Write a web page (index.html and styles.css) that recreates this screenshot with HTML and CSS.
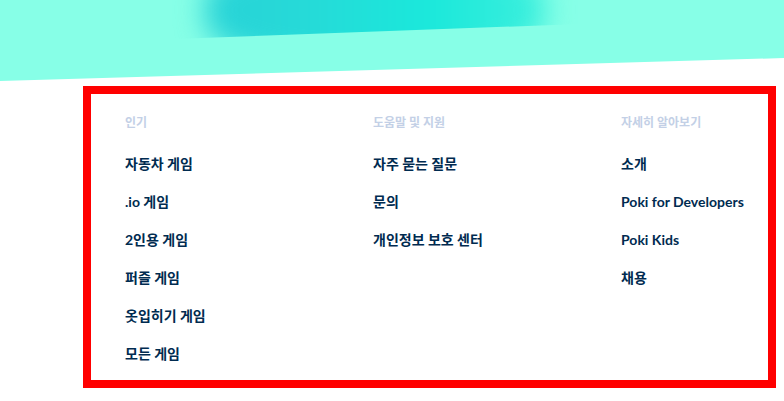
FILE: index.html
```html
<!DOCTYPE html>
<html lang="ko">
<head>
<meta charset="utf-8">
<link rel="stylesheet" href="styles.css">
</head>
<body>
<div class="hero">
  <div class="blob-clip"><div class="blob"></div></div>
</div>
<nav class="footer-nav">
  <div class="col">
    <div class="col-title">인기</div>
    <a class="link" href="#">자동차 게임</a>
    <a class="link" href="#">.io 게임</a>
    <a class="link" href="#">2인용 게임</a>
    <a class="link" href="#">퍼즐 게임</a>
    <a class="link" href="#">옷입히기 게임</a>
    <a class="link" href="#">모든 게임</a>
  </div>
  <div class="col">
    <div class="col-title">도움말 및 지원</div>
    <a class="link" href="#">자주 묻는 질문</a>
    <a class="link" href="#">문의</a>
    <a class="link" href="#">개인정보 보호 센터</a>
  </div>
  <div class="col">
    <div class="col-title">자세히 알아보기</div>
    <a class="link" href="#">소개</a>
    <a class="link" href="#">Poki for Developers</a>
    <a class="link" href="#">Poki Kids</a>
    <a class="link" href="#">채용</a>
  </div>
</nav>
</body>
</html>
```

FILE: styles.css
```css
html, body {
  margin: 0;
  padding: 0;
  background: #ffffff;
}
body {
  width: 784px;
  height: 401px;
  overflow: hidden;
  font-family: Lato, "Noto Sans CJK KR", "Noto Sans", sans-serif;
}
.hero {
  position: relative;
  height: 81px;
  background: #87ffe7;
  clip-path: polygon(0 0, 100% 0, 100% 58px, 0 81px);
  overflow: hidden;
}
.blob-clip {
  position: absolute;
  left: 160px;
  top: 0;
  width: 420px;
  height: 50px;
  clip-path: polygon(0 0, 100% 0, 100% 24px, 0 39.5px);
}
.blob {
  position: absolute;
  left: 45px;
  top: -45px;
  width: 340px;
  height: 110px;
  border-radius: 40%;
  background: linear-gradient(90deg, #28d2d6 0%, #26dad8 30%, #1ae8db 65%, #3cefdc 100%);
  filter: blur(14px);
}
.footer-nav {
  margin: 5px 0 0 83px;
  width: 693px;
  height: 302px;
  box-sizing: border-box;
  border: 8px solid #ff0000;
  padding: 21px 0 0 34px;
  display: grid;
  grid-template-columns: 248px 248px 1fr;
}
.col {
  display: flex;
  flex-direction: column;
}
.col-title {
  font-size: 12px;
  line-height: 16px;
  font-weight: 700;
  color: #c3d0e6;
  margin-bottom: 14px;
}
.link {
  font-size: 14px;
  line-height: 38px;
  font-weight: 700;
  color: #002b50;
  text-decoration: none;
}
```
